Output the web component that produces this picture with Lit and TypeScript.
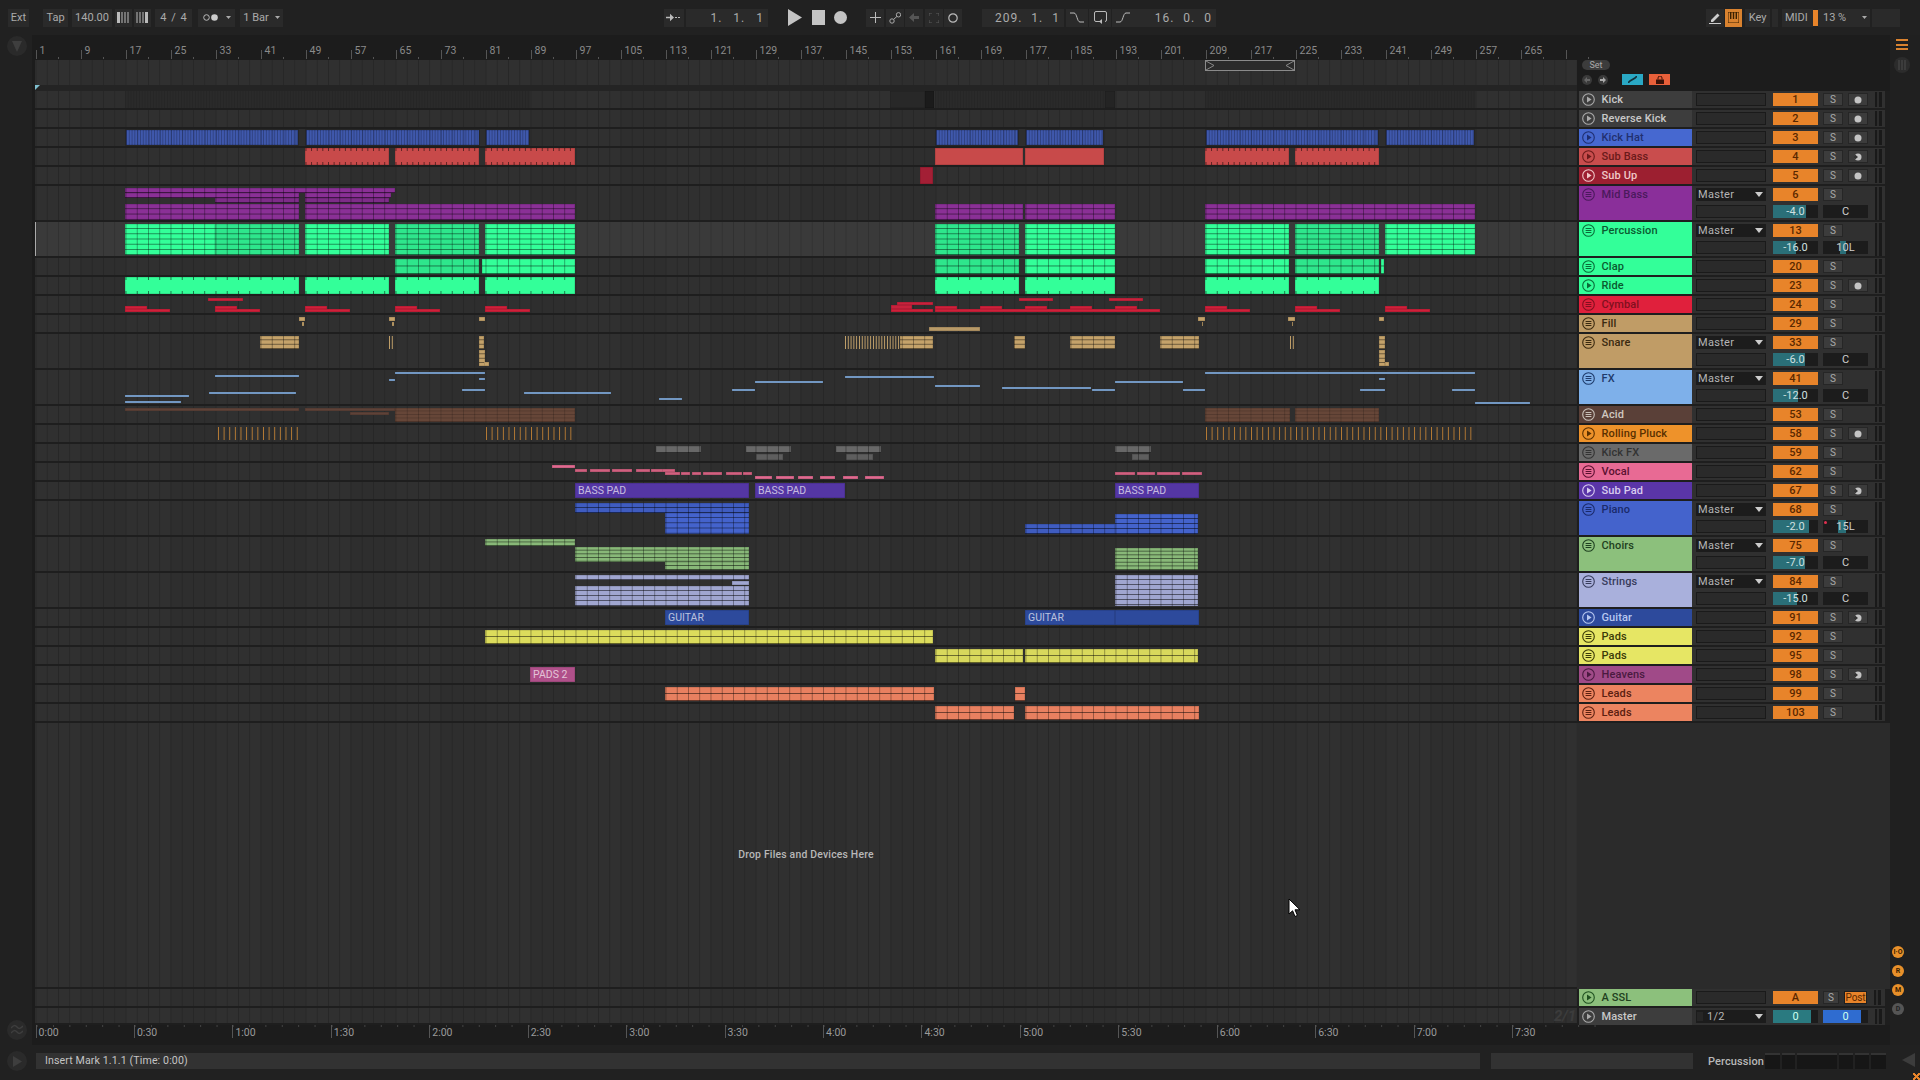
import { LitElement, html, css, svg } from "lit";
import { customElement } from "lit/decorators.js";

type Clip = { x: number; w: number; y: number; h: number; k: string; c?: string; r?: number; l?: string };
const clip = (x1: number, x2: number, y1: number, y2: number, k = "f", c?: string, r?: number, l?: string): Clip =>
  ({ x: x1, w: x2 - x1, y: y1, h: y2 - y1, k, c, r, l });
const spans = (list: number[][], y1: number, y2: number, k = "f", c?: string, r?: number) =>
  list.map(([a, b]) => clip(a, b, y1, y2, k, c, r));

const G = "#33ff99", GD = "#2ee68c";
const TRACKS: any[] = [
  { n: "Kick", c: "#3d3d3d", t: "#c8c8c8", ic: "#aaa", p: 1, num: "1", m: "f",
    clips: [...spans([[125, 530], [935, 1104], [1205, 1475]], 91, 108, "sd", "#2a2a2a"), clip(890, 925, 91, 108, "f", "#282828"), clip(925, 934, 91, 108, "f", "#1b1b1b"), clip(1105, 1115, 91, 108, "f", "#242424")] },
  { n: "Reverse Kick", c: "#3d3d3d", t: "#c8c8c8", ic: "#aaa", p: 1, num: "2", m: "f", clips: [] },
  { n: "Kick Hat", c: "#4668d0", t: "#22306f", ic: "#1f2e70", p: 1, num: "3", m: "f",
    clips: spans([[125, 299], [305, 480], [485, 530], [935, 1019], [1025, 1104], [1205, 1379], [1385, 1475]], 129, 146, "s", "#3f58ac") },
  { n: "Sub Bass", c: "#c94d4d", t: "#6a1a1a", ic: "#6a1a1a", p: 1, num: "4", m: "h",
    clips: [...spans([[305, 389], [395, 479], [485, 575], [1205, 1289], [1295, 1379]], 148, 165, "k k5", "#c84a4a"), ...spans([[935, 1023], [1025, 1104]], 148, 165, "f", "#c84a4a")] },
  { n: "Sub Up", c: "#9c1f30", t: "#f0c8c8", ic: "#f0c8c8", p: 1, num: "5", m: "f", clips: [clip(920, 933, 167, 184, "f", "#a31f35")] },
  { n: "Mid Bass", tall: 1, c: "#8a2f9a", t: "#4a1a5c", ic: "#4a1a5c", num: "6", vol: "-4.0", vp: 74, pan: "C",
    clips: [clip(125, 395, 188, 193, "g", "#8a3096", 5), ...spans([[125, 299], [305, 391]], 193, 198, "g", "#8a3096", 5), ...spans([[215, 299], [305, 389]], 198, 203, "g", "#7d2c88", 5),
      ...spans([[125, 299], [305, 575], [935, 1023], [1025, 1115], [1205, 1475]], 204, 220, "g", "#8a3096", 5.3)] },
  { n: "Percussion", tall: 1, sel: 1, c: G, t: "#0a5a30", ic: "#0a6a38", num: "13", vol: "-16.0", vp: 52, pan: "10L", pf: [37, 51],
    clips: [...spans([[125, 215], [305, 389], [485, 575], [1025, 1115], [1205, 1289], [1385, 1475]], 224, 255, "g", G, 5.2), ...spans([[215, 299], [395, 479], [935, 1019], [1295, 1379]], 224, 255, "g", GD, 5.2)] },
  { n: "Clap", c: G, t: "#0a5a30", ic: "#0a6a38", num: "20",
    clips: [...spans([[395, 479], [935, 1019], [1295, 1379]], 259, 274, "g", GD, 7.5), ...spans([[482, 575], [1025, 1115], [1205, 1289], [1381, 1384]], 259, 274, "g", G, 7.5)] },
  { n: "Ride", c: G, t: "#0a5a30", ic: "#0a6a38", p: 1, num: "23", m: "f",
    clips: spans([[125, 299], [305, 389], [395, 479], [485, 575], [935, 1019], [1025, 1115], [1205, 1289], [1295, 1379]], 277, 294, "k", G) },
  { n: "Cymbal", c: "#e0203c", t: "#80101f", ic: "#80101f", num: "24",
    clips: [...spans([[208, 243], [1019, 1053], [1109, 1143]], 298, 301, "f", "#c8223c"), clip(897, 933, 302, 305, "f", "#c8223c"), clip(891, 912, 305, 309, "f", "#c8223c"),
      ...spans([[125, 147], [215, 237], [305, 327], [395, 417], [485, 507], [935, 957], [980, 1002], [1025, 1047], [1070, 1092], [1115, 1137], [1205, 1227], [1295, 1317], [1385, 1407]], 306, 309, "f", "#d0203a"),
      ...spans([[125, 170], [215, 260], [305, 350], [395, 440], [485, 530], [891, 933], [935, 1160], [1205, 1250], [1295, 1340], [1385, 1430]], 309, 312, "f", "#d0203a")] },
  { n: "Fill", c: "#c09c66", t: "#3a2a10", ic: "#3a2a10", num: "29",
    clips: [...spans([[299, 305], [389, 395], [479, 485], [1198, 1205], [1288, 1295], [1379, 1384]], 317, 321, "f", "#c4a26a"), ...spans([[302, 304], [392, 394], [1202, 1203], [1292, 1293]], 322, 326, "f", "#c4a26a"), clip(929, 980, 327, 331, "f", "#b89a68")] },
  { n: "Snare", tall: 1, c: "#c09c66", t: "#3a2a10", ic: "#3a2a10", num: "33", vol: "-6.0", vp: 72, pan: "C",
    clips: [...spans([[260, 299], [900, 933], [1014, 1025], [1070, 1115], [1160, 1199], [1379, 1385], [479, 484]], 336, 349, "g", "#c4a26a", 4.4), clip(845, 900, 336, 349, "p p2", "#c4a26a"), ...spans([[389, 393], [1290, 1294]], 336, 349, "p p2", "#c4a26a"), clip(479, 485, 350, 366, "g", "#c4a26a", 4.4), clip(1379, 1385, 350, 366, "g", "#c4a26a", 4.4), clip(484, 489, 362, 366, "f", "#c4a26a"), clip(1385, 1389, 362, 366, "f", "#c4a26a")] },
  { n: "FX", tall: 1, c: "#7eb0ea", t: "#1e3a6a", ic: "#1e3a6a", num: "41", vol: "-12.0", vp: 55, pan: "C",
    clips: [[215, 299, 375], [389, 395, 379], [395, 485, 372], [479, 485, 378], [125, 189, 395], [125, 181, 401], [209, 296, 392], [462, 485, 389], [524, 611, 392], [659, 682, 398], [732, 755, 389], [755, 823, 381], [845, 934, 376], [935, 980, 385], [1002, 1091, 387], [1092, 1115, 389], [1115, 1183, 381], [1183, 1205, 389], [1205, 1475, 372], [1360, 1385, 389], [1379, 1385, 378], [1452, 1475, 389], [1475, 1530, 402]].map(([a, b, y]) => clip(a, b, y, y + 2, "f", "#7fa8d8")) },
  { n: "Acid", c: "#5a4038", t: "#d0c8c0", ic: "#c8c0b8", num: "53",
    clips: [...spans([[125, 299], [305, 395]], 408, 411, "f", "#5e4238"), clip(350, 389, 412, 415, "f", "#5e4238"), ...spans([[395, 575], [1205, 1290], [1295, 1379]], 408, 422, "gs", "#664638", 3.5)] },
  { n: "Rolling Pluck", c: "#ee922a", t: "#5a3000", ic: "#5a3000", p: 1, num: "58", m: "f",
    clips: spans([[218, 299], [486, 573], [1206, 1474]], 427, 440, "p", "#b87c34") },
  { n: "Kick FX", c: "#6a6a6a", t: "#333", ic: "#333", num: "59",
    clips: [...spans([[656, 701], [746, 791], [836, 881], [1115, 1151]], 446, 453, "g", "#686868", 7), ...spans([[756, 783], [846, 873], [1132, 1149]], 454, 460, "g", "#5e5e5e", 7)] },
  { n: "Vocal", c: "#e86a94", t: "#5a1030", ic: "#5a1030", num: "62",
    clips: [clip(552, 575, 465, 468, "f", "#e06a90"), ...spans([[575, 587], [590, 610], [612, 632], [636, 650], [651, 663], [662, 675]], 469, 472, "f", "#d0607f"), ...spans([[665, 680], [681, 690], [692, 701], [703, 722], [726, 742], [743, 752]], 472, 475, "f", "#d0607f"), ...spans([[755, 772], [776, 794], [798, 813], [820, 835], [843, 858], [865, 884]], 476, 479, "f", "#e06a90"), ...spans([[1115, 1135], [1137, 1155], [1157, 1180], [1182, 1202]], 472, 475, "f", "#d0607f")] },
  { n: "Sub Pad", c: "#5a35a8", t: "#d8ccf0", ic: "#d8ccf0", p: 1, num: "67", m: "h",
    clips: [clip(575, 749, 483, 498, "l", "#5436a4", 0, "BASS PAD"), clip(755, 845, 483, 498, "l", "#5436a4", 0, "BASS PAD"), clip(1115, 1199, 483, 498, "l", "#5436a4", 0, "BASS PAD")] },
  { n: "Piano", tall: 1, c: "#4463cc", t: "#1a2a6a", ic: "#1a2a6a", num: "68", vol: "-2.0", vp: 79, pan: "15L", pf: [33, 51], dot: 1,
    clips: [clip(575, 749, 503, 513, "g", "#3f5cc0", 5), clip(665, 749, 513, 534, "g", "#4463cc", 5.2), clip(1025, 1115, 524, 534, "g", "#3f5cc0", 5), clip(1115, 1198, 514, 534, "g", "#4463cc", 5)] },
  { n: "Choirs", tall: 1, c: "#8cc07c", t: "#1f4020", ic: "#1f4020", num: "75", vol: "-7.0", vp: 72, pan: "C",
    clips: [clip(485, 575, 539, 546, "g", "#88b878", 3.5), clip(575, 749, 547, 562, "g", "#88b878", 3.7), clip(665, 749, 562, 570, "g", "#88b878", 4), clip(1115, 1198, 548, 570, "g", "#88b878", 3.7)] },
  { n: "Strings", tall: 1, c: "#a9b0dc", t: "#383c5c", ic: "#383c5c", num: "84", vol: "-15.0", vp: 53, pan: "C",
    clips: [clip(575, 749, 575, 580, "g", "#a0a6d0", 5), clip(732, 749, 581, 585, "f", "#a0a6d0"), clip(575, 749, 586, 606, "g", "#a0a6d0", 5), clip(1115, 1198, 575, 606, "g", "#a0a6d0", 5)] },
  { n: "Guitar", c: "#2d4a9c", t: "#b8c8f0", ic: "#b8c8f0", p: 1, num: "91", m: "h",
    clips: [clip(665, 749, 610, 625, "l", "#2d4a9c", 0, "GUITAR"), clip(1025, 1115, 610, 625, "l", "#2d4a9c", 0, "GUITAR"), clip(1115, 1199, 610, 625, "l", "#2d4a9c")] },
  { n: "Pads", c: "#e6e664", t: "#3a3a08", ic: "#3a3a08", num: "92", clips: [clip(485, 933, 630, 644, "g", "#dcdc5c", 7)] },
  { n: "Pads", c: "#e6e664", t: "#3a3a08", ic: "#3a3a08", num: "95", clips: [clip(935, 1023, 649, 663, "g", "#d8d85c", 7), clip(1025, 1198, 649, 663, "g", "#d8d85c", 7)] },
  { n: "Heavens", c: "#a04a88", t: "#4a1a40", ic: "#4a1a40", p: 1, num: "98", m: "h", clips: [clip(530, 575, 667, 682, "l", "#b0508a", 0, "PADS 2")] },
  { n: "Leads", c: "#ec8460", t: "#5a2010", ic: "#5a2010", num: "99", clips: [clip(665, 934, 687, 701, "g", "#e88060", 7), clip(1015, 1025, 687, 701, "g", "#e88060", 7)] },
  { n: "Leads", c: "#ec8460", t: "#5a2010", ic: "#5a2010", num: "103", clips: [clip(935, 1014, 706, 720, "g", "#e88060", 7), clip(1025, 1199, 706, 720, "g", "#e88060", 7)] },
];

const circleIcon = (col: string, play: boolean) => html`<svg class="tic" viewBox="0 0 13 13" fill="none" stroke=${col} stroke-width="1.1">
  <circle cx="6.5" cy="6.5" r="5.8"></circle>
  ${play ? svg`<path d="M5 3.6 L9.6 6.5 L5 9.4Z" fill=${col} stroke="none"></path>` : svg`<path d="M3.6 4.5H9.4M3.6 6.5H9.4M3.6 8.5H9.4"></path>`}
</svg>`;

@customElement("app-root")
export class AppRoot extends LitElement {
  static styles = css`
    :host { display:block; width:1920px; height:1080px; background:#212121; font-family:Roboto,"Open Sans",sans-serif; color:#aaa; overflow:hidden; position:relative; }
    .app { display:flex; flex-direction:column; height:1080px; }
    svg { display:block; }

    .toolbar { height:35px; flex:none; display:flex; align-items:center; font-size:11px; color:#aaa; }
    .b { height:18px; flex:none; background:#2a2a2a; display:flex; align-items:center; justify-content:center; margin-top:0; }
    .ext { width:21px; margin-left:8px; }
    .tap { width:25px; margin-left:14px; }
    .bpm { width:40px; margin-left:4px; }
    .n1 { width:17px; margin-left:3px; }
    .n2 { width:17px; margin-left:2px; }
    .sig { width:37px; margin-left:4px; word-spacing:2px; }
    .qz { width:37px; margin-left:6px; gap:8px; }
    .bar1 { width:43px; margin-left:5px; gap:6px; }
    .arr { width:20px; margin-left:381px; }
    .pos { width:82px; margin-left:2px; justify-content:flex-end; padding-right:4px; box-sizing:border-box; letter-spacing:1px; word-spacing:5px; font-size:12px; }
    .first { word-spacing:7px; }
    .transport { display:flex; align-items:center; gap:9.5px; margin-left:20px; }
    .tools { display:flex; margin-left:19px; gap:1.5px; }
    .tools .b { width:18px; }
    .pos2 { margin-left:20px; }
    .curves { display:flex; margin-left:2px; gap:1px; }
    .curves .b { width:22px; }
    .len { margin-left:0; }
    .pen { width:18px; margin-left:490px; }
    .keys { width:17px; height:18px; flex:none; margin-left:1px; background:#d9822f; display:flex; align-items:center; justify-content:center; }
    .key { width:25px; margin-left:3px; }
    .small { width:6px; margin-left:2px; }
    .midi { width:31px; margin-left:4px; justify-content:flex-start; padding-left:3px; box-sizing:border-box; }
    .pct { width:52px; justify-content:flex-start; padding-left:5px; box-sizing:border-box; gap:16px; }
    .orange { width:5px; height:16px; flex:none; background:#e8842a; }
    .tail { width:28px; margin-left:2px; }

    .mid { flex:none; height:1010px; display:flex; }
    .left { width:32px; flex:none; display:flex; flex-direction:column; justify-content:space-between; align-items:center; padding:1px 0 5px 2px; box-sizing:border-box; }
    .roundbtn { width:20px; height:20px; border-radius:50%; background:#2a2a2a; display:flex; align-items:center; justify-content:center; }
    .panel { width:1858px; flex:none; background:#1c1c1c; display:flex; flex-direction:column; padding-left:3px; box-sizing:border-box; }
    .right { flex:1; display:flex; flex-direction:column; align-items:center; padding:4px 6px 0 0; box-sizing:border-box; background:#202020; }
    .burger { width:12px; height:11px; display:flex; flex-direction:column; justify-content:space-between; margin-bottom:7px; }
    .burger i { height:2px; background:#d9822f; display:block; }
    .dis { width:16px; height:16px; border-radius:50%; background:#2c2c2c; display:flex; align-items:center; justify-content:center; }
    .sidebtns { margin-top:auto; display:flex; flex-direction:column; gap:7px; padding-bottom:30px; margin-left:-8px; }
    .sb { width:12px; height:12px; border-radius:50%; background:#e8902a; color:#3a2000; font-size:7px; font-weight:700; display:flex; align-items:center; justify-content:center; }
    .sb.off { background:#555; color:#222; }

    .ruler { height:25px; flex:none; display:flex; align-items:flex-end; padding-left:.5px; }
    .rt { flex:none; width:45px; height:16px; box-sizing:border-box; font-size:10.5px; line-height:16px; padding-left:4px; color:#8a8a8a; position:relative; top:-1px; background:linear-gradient(#555,#555) 0 100%/1px 9px no-repeat,linear-gradient(#555,#555) 22px 100%/1px 2px no-repeat; }

    .hdr { height:31px; flex:none; display:flex; }
    .hlane { width:1542px; flex:none; display:flex; flex-direction:column; }
    .locs { height:25px; flex:none; position:relative; }
    .hdark { height:6px; flex:none; position:relative; background:#242424; }
    .grid { background-color:#2e2e2e; background-image:linear-gradient(90deg,#272727 1px,transparent 1px),repeating-linear-gradient(90deg,rgba(255,255,255,.012) 0 45px,transparent 45px 90px); background-size:11.25px 100%,auto; background-position:.5px 0,.5px 0; }
    .loop { position:absolute; left:1170px; width:90px; top:0; height:11px; border:1px solid #8a8a8a; box-sizing:border-box; background:#2a2a2a; }
    .loop svg { position:absolute; left:0; top:0; }
    .loop .e { left:auto; right:0; }
    .mark { position:absolute; left:0; top:0; }
    .hside { padding:0 0 0 5px; flex:1; display:flex; flex-direction:column; align-items:flex-start; }
    .set { width:28px; height:10px; border-radius:5px; background:#3c3c3c; font-size:9px; line-height:10px; text-align:center; color:#aaa; }
    .hbtns { display:flex; align-items:center; margin-top:4px; }
    .dot { width:10px; height:10px; border-radius:50%; background:#3a3a3a; margin-right:6px; display:flex; align-items:center; justify-content:center; }
    .cy { width:21px; height:11px; background:#2aa8c4; margin-left:8px; display:flex; align-items:center; justify-content:center; }
    .lk { width:21px; height:11px; background:#e8603a; margin-left:6px; display:flex; align-items:center; justify-content:center; }

    .row { height:19px; flex:none; display:flex; background:#1e1e1e; }
    .row.tall { height:36px; }
    .lane { width:1542px; flex:none; height:calc(100% - 2px); position:relative; }
    .lane.sel { background-color:#3a3a3a; background-image:linear-gradient(90deg,#313131 1px,transparent 1px); box-shadow:inset 1px 0 #aaa; }
    .clip { position:absolute; box-shadow:inset 0 0 0 .5px rgba(0,0,0,.2); overflow:hidden; }
    .clip.g { background-image:linear-gradient(rgba(0,0,0,.5) 1px,transparent 1px),linear-gradient(90deg,rgba(0,0,0,.35) 1px,transparent 1px); background-size:100% var(--r),11.25px 100%; background-position:0 calc(var(--r) - 1px),var(--o) 0; }
    .clip.gs { background-image:linear-gradient(rgba(0,0,0,.18) 1px,transparent 1px),linear-gradient(90deg,rgba(0,0,0,.18) 1px,transparent 1px); background-size:100% var(--r),11.25px 100%; background-position:0 calc(var(--r) - 1px),var(--o) 0; }
    .clip.s { background-image:linear-gradient(90deg,rgba(0,0,0,.25) 1px,transparent 1px),linear-gradient(90deg,rgba(0,0,0,.2) 1px,transparent 1px); background-size:2.8px 100%,11.25px 100%; }
    .clip.sd { box-shadow:none; background-image:linear-gradient(90deg,rgba(0,0,0,.1) 1px,transparent 1px); background-size:2.8px 100%; }
    .clip.k { background-image:linear-gradient(90deg,rgba(0,0,0,.55) 1px,transparent 1px),linear-gradient(90deg,rgba(0,0,0,.55) 1px,transparent 1px); background-size:11.25px 3px,11.25px 3px; background-repeat:repeat-x; background-position:var(--o) 0,var(--o) 100%; }
    .clip.k5 { background-size:5.625px 3px,5.625px 3px; }
    .clip.p { background-color:transparent !important; box-shadow:none; background-image:linear-gradient(90deg,var(--c) 1px,transparent 1px); background-size:5.625px 100%; }
    .clip.p2 { background-size:2.8px 100%; }
    .clip.l { font-size:10.5px; line-height:15px; padding-left:3px; box-sizing:border-box; color:rgba(255,255,255,.68); white-space:nowrap; }
    .title { width:113px; flex:none; margin-left:2px; height:17px; display:flex; align-items:flex-start; padding:2px 0 0 3px; box-sizing:border-box; font-size:11px; font-weight:500; letter-spacing:.12px; line-height:13px; }
    .tall .title { height:34px; }
    .tic { width:13px; height:13px; flex:none; margin-right:6.5px; }
    .slotcol { width:78px; flex:none; height:17px; background:#303030; display:flex; flex-direction:column; gap:4px; padding:2px 4px 0; box-sizing:border-box; }
    .tall .slotcol { height:34px; }
    .slot { height:13px; box-sizing:border-box; background:#2a2a2a; border:1px solid #1a1a1a; flex:none; }
    .drop { height:13px; background:#1c1c1c; font-size:11px; color:#b5b5b5; padding-left:2px; line-height:13px; letter-spacing:.3px; position:relative; flex:none; }
    .drop::after { content:""; position:absolute; right:3px; top:4px; border-left:4px solid transparent; border-right:4px solid transparent; border-top:5px solid #ccc; }
    .mix { padding:2px 0 0 3px; box-sizing:border-box; width:115px; flex:none; height:17px; background:#303030; display:grid; grid-template-columns:45px 20px 20px 7px; column-gap:5px; grid-template-rows:13px; row-gap:4px; }
    .tall .mix { height:34px; grid-template-rows:13px 13px; }
    .mix.ret { grid-template-columns:45px 16px 23px 7px; column-gap:5px 6px; }
    .num { background:#e8842a; color:#5a2800; font-size:11px; font-weight:500; text-align:center; line-height:13px; }
    .s { background:#3c3c3c; border:1px solid #262626; box-sizing:border-box; font-size:10px; line-height:11px; text-align:center; color:#aaa; }
    .mon { background:#3c3c3c; border:1px solid #262626; box-sizing:border-box; display:flex; align-items:center; justify-content:center; }
    .meter { grid-column:4; grid-row:1 / -1; margin-left:2px; margin-top:-1px; background:linear-gradient(90deg,#191919 0 2px,#2d2d2d 2px 4px,#191919 4px 6px); width:7px; height:15px; }
    .tall .meter { height:33px; }
    .vol { grid-column:1; background:#1c1c1c; font-size:11px; line-height:13px; text-align:center; color:#cfe0e0; position:relative; }
    .vol i,.pan i { position:absolute; top:0; bottom:0; display:block; background:#2a6f78; }
    .vol span,.pan span { position:relative; }
    .pan { grid-column:2 / 4; background:#1c1c1c; font-size:11px; line-height:13px; text-align:center; color:#cfcfcf; position:relative; }
    .red { position:absolute; left:1px; top:1px; width:3px; height:3px; border-radius:50%; background:#e03050; }

    .filler { flex:1; display:flex; min-height:0; }
    .fl { width:1542px; flex:none; display:flex; align-items:center; justify-content:center; border-bottom:2px solid #1e1e1e; box-sizing:border-box; font-size:10.4px; font-weight:500; color:#b8b8b8; letter-spacing:.2px; padding-bottom:2px; }
    .fr { flex:1; background:#2b2b2b; }
    .frow { height:19px; }
    .frow.last { height:17px; }
    .post { background:#e8842a; border:1px solid #1e1e1e; box-sizing:border-box; color:#5a2800; font-size:10px; line-height:11px; text-align:center; letter-spacing:-.1px; }
    .retnum { background:#e8842a; color:#5a2800; font-size:11px; font-weight:500; text-align:center; line-height:13px; }
    .cue { background:#1c1c1c; position:relative; color:#cfe; font-size:11px; text-align:center; line-height:13px; }
    .cue.bl { grid-column:2 / 4; }
    .cue i { position:absolute; left:0; top:0; bottom:0; width:85%; display:block; background:#2a7a80; }
    .cue.bl i { background:#2f6cd0; }
    .cue span { position:relative; }
    .sub21 { position:absolute; right:1px; top:1px; font-size:15px; font-weight:700; font-style:italic; color:#3c3c3c; line-height:15px; }
    .msdrop { color:#b5b5b5; padding-left:11px; }
    .msdrop::before { content:""; position:absolute; left:1px; top:2px; width:6px; height:9px; background:#262626; }

    .time { height:20px; flex:none; display:flex; padding-left:.5px; position:relative; }
    .tm { flex:none; width:98.44px; height:13px; border-left:1px solid #555; box-sizing:border-box; font-size:10.5px; color:#9a9a9a; padding:2px 0 0 2px; line-height:12px; background:linear-gradient(90deg,#444 1px,transparent 1px) 16px 0/16.4px 2px repeat-x; }

    .status { flex:1; display:flex; align-items:flex-start; padding-top:8px; box-sizing:border-box; position:relative; }
    .st-play { width:20px; height:20px; border-radius:50%; background:#2a2a2a; margin:-2px 0 0 7px; display:flex; align-items:center; justify-content:center; flex:none; }
    .msg { width:1444px; height:16px; margin-left:9px; flex:none; background:#323232; font-size:10.6px; line-height:16px; padding-left:9px; box-sizing:border-box; color:#c4c4c4; letter-spacing:.12px; }
    .st2 { width:202px; height:16px; margin-left:11px; flex:none; background:#323232; }
    .cur { font-size:11px; font-weight:500; color:#b8b8b8; margin-left:15px; line-height:18px; width:57px; flex:none; letter-spacing:.1px; }
    .thumbs { display:flex; gap:2px; flex:none; height:16px; }
    .thumbs i { display:block; height:16px; background:#161616; box-shadow:inset 0 2px #333; }
    .t1 { width:15px; } .t2 { width:13px; } .t3 { width:40px; } .t4 { width:14px; }
    .st-tri { margin-left:16px; flex:none; }
    .cursor { position:absolute; left:1288px; top:898px; }
    .corner { position:absolute; right:0; bottom:0; width:7px; height:7px; background:linear-gradient(45deg,transparent 40%,#e8842a 40% 60%,transparent 60%),linear-gradient(-45deg,transparent 40%,#e8842a 40% 60%,transparent 60%); }
  `;

  private clips(list: Clip[], top: number) {
    return list.map((c) => {
      const x = c.x - 35;
      const o = -((c.x - 35.5) % 11.25);
      return html`<div class="clip ${c.k}" style="left:${x}px;width:${c.w}px;top:${c.y - top}px;height:${c.h}px;background-color:${c.c};--c:${c.c};--r:${c.r ?? 5}px;--o:${o}px">${c.l ?? ""}</div>`;
    });
  }

  private monBtn(m?: string) {
    if (!m) return html`<div></div>`;
    return html`<div class="mon"><svg width="8" height="8" viewBox="0 0 8 8">
      <circle cx="4" cy="4" r="3.5" fill="#c4c4c4"></circle>
      ${m === "h" ? svg`<path d="M4 4L1 6.5A3.9 3.9 0 0 1 1 1.5Z" fill="#333"></path>` : ""}
    </svg></div>`;
  }

  private trackRow(t: any, y: number) {
    return html`<div class="row ${t.tall ? "tall" : ""}">
      <div class="lane grid ${t.sel ? "sel" : ""}">${this.clips(t.clips, y)}</div>
      <div class="title" style="background:${t.c};color:${t.t}">${circleIcon(t.ic, !!t.p)}<span>${t.n}</span></div>
      <div class="slotcol">
        ${t.tall ? html`<div class="drop">Master</div>` : ""}
        <div class="slot"></div>
      </div>
      <div class="mix">
        <div class="num">${t.num}</div>
        <div class="s">S</div>
        ${this.monBtn(t.m)}
        <div class="meter"></div>
        ${t.tall ? html`
          <div class="vol"><i style="left:0;width:${t.vp}%"></i><span>${t.vol}</span></div>
          <div class="pan">${t.pf ? html`<i style="left:${t.pf[0]}%;width:${t.pf[1] - t.pf[0]}%"></i>` : ""}${t.dot ? html`<b class="red"></b>` : ""}<span>${t.pan}</span></div>
        ` : ""}
      </div>
    </div>`;
  }

  render() {
    let y = 91;
    const bars = Array.from({ length: 34 }, (_, i) => i * 8 + 1);
    const times = Array.from({ length: 16 }, (_, i) => `${Math.floor(i / 2)}:${i % 2 ? "30" : "00"}`);
    return html`<div class="app">
      <div class="toolbar">
        <div class="b ext">Ext</div>
        <div class="b tap">Tap</div>
        <div class="b bpm">140.00</div>
        <div class="b n1"><svg width="13" height="11" viewBox="0 0 13 11" fill="#bbb"><rect x="0" width="3" height="11"></rect><rect x="4.5" width="1" height="11"></rect><rect x="7.5" width="1" height="11"></rect><rect x="10.5" width="1" height="11"></rect></svg></div>
        <div class="b n2"><svg width="13" height="11" viewBox="0 0 13 11" fill="#bbb"><rect x="0.5" width="1" height="11"></rect><rect x="3.5" width="1" height="11"></rect><rect x="6.5" width="1" height="11"></rect><rect x="9" width="3" height="11"></rect></svg></div>
        <div class="b sig">4 / 4</div>
        <div class="b qz"><svg width="15" height="7" viewBox="0 0 15 7"><circle cx="3.5" cy="3.5" r="2.8" fill="none" stroke="#bbb"></circle><circle cx="11.5" cy="3.5" r="3.3" fill="#ccc"></circle></svg><svg width="5" height="3" viewBox="0 0 5 3"><path d="M0 0H5L2.5 3Z" fill="#aaa"></path></svg></div>
        <div class="b bar1">1 Bar<svg width="5" height="3" viewBox="0 0 5 3"><path d="M0 0H5L2.5 3Z" fill="#aaa"></path></svg></div>

        <div class="b arr"><svg width="16" height="9" viewBox="0 0 16 9" fill="#bbb"><path d="M0 3.7H4V0.8L8 4.5L4 8.2V5.3H0Z"></path><rect x="9" y="4" width="2" height="1"></rect><rect x="12" y="4" width="2" height="1"></rect></svg></div>
        <div class="b pos first">1. 1. 1</div>
        <div class="transport">
          <svg width="14" height="17" viewBox="0 0 14 17"><path d="M0 0L14 8.5L0 17Z" fill="#c4c4c4"></path></svg>
          <svg width="13" height="15" viewBox="0 0 13 15"><rect width="13" height="15" fill="#c4c4c4"></rect></svg>
          <svg width="13" height="13" viewBox="0 0 13 13"><circle cx="6.5" cy="6.5" r="6.5" fill="#c4c4c4"></circle></svg>
        </div>
        <div class="tools">
          <div class="b"><svg width="11" height="11" viewBox="0 0 11 11" stroke="#bbb"><path d="M5.5 0V11M0 5.5H11"></path></svg></div>
          <div class="b"><svg width="12" height="12" viewBox="0 0 12 12" fill="none" stroke="#aaa"><circle cx="3" cy="9" r="2.2"></circle><circle cx="9.5" cy="2.8" r="2.2"></circle><path d="M4.6 7.4L8 4.4"></path></svg></div>
          <div class="b"><svg width="10" height="9" viewBox="0 0 10 9" fill="#555"><path d="M5 0V3H10V6H5V9L0 4.5Z"></path></svg></div>
          <div class="b"><svg width="10" height="10" viewBox="0 0 10 10" fill="none" stroke="#5a5a5a"><path d="M0 3V0H3M7 0H10V3M10 7V10H7M3 10H0V7"></path></svg></div>
          <div class="b"><svg width="10" height="10" viewBox="0 0 10 10"><circle cx="5" cy="5" r="4.2" fill="none" stroke="#bbb" stroke-width="1.2"></circle></svg></div>
        </div>
        <div class="b pos pos2">209. 1. 1</div>
        <div class="curves">
          <div class="b"><svg width="14" height="11" viewBox="0 0 14 11" fill="none" stroke="#bbb"><path d="M0 1H4C7 1 7 10 10 10H14"></path></svg></div>
          <div class="b"><svg width="13" height="13" viewBox="0 0 13 13" fill="none" stroke="#bbb"><path d="M7 10.5H2A1.5 1.5 0 0 1 .5 9V2A1.5 1.5 0 0 1 2 .5H11A1.5 1.5 0 0 1 12.5 2V9A1.5 1.5 0 0 1 11 10.5"></path><path d="M8 8V13L5 10.5Z" fill="#bbb" stroke="none"></path></svg></div>
          <div class="b"><svg width="14" height="11" viewBox="0 0 14 11" fill="none" stroke="#bbb"><path d="M0 10H4C7 10 7 1 10 1H14"></path></svg></div>
        </div>
        <div class="b pos len">16. 0. 0</div>
        <div class="b pen"><svg width="12" height="12" viewBox="0 0 12 12"><path d="M2 8L8.5 1.5L10.5 3.5L4 10H2Z" fill="#ccc"></path><rect y="11" width="12" height="1" fill="#ccc"></rect></svg></div>
        <div class="keys"><svg width="11" height="11" viewBox="0 0 11 11"><path d="M0 0H11V11H0Z" fill="none" stroke="#3a2000"></path><path d="M2 0H3.4V7H2ZM4.8 0H6.2V7H4.8ZM7.6 0H9V7H7.6ZM3.7 7V11M6.5 7V11" fill="#3a2000"></path></svg></div>
        <div class="b key">Key</div>
        <div class="b small"></div>
        <div class="b midi">MIDI</div>
        <div class="orange"></div>
        <div class="b pct">13 %<svg width="5" height="3" viewBox="0 0 5 3"><path d="M0 0H5L2.5 3Z" fill="#aaa"></path></svg></div>
        <div class="b tail"></div>
      </div>

      <div class="mid">
        <div class="left">
          <div class="roundbtn"><svg width="10" height="11" viewBox="0 0 10 11"><path d="M0 0H10L5 11Z" fill="#3e3e3e"></path></svg></div>
          <div class="roundbtn"><svg width="12" height="12" viewBox="0 0 12 12" fill="none" stroke="#3e3e3e" stroke-width="1.5"><path d="M0 4C3 1 4 1 6 3S9 5 12 2M0 9C3 6 4 6 6 8S9 10 12 7"></path></svg></div>
        </div>
        <div class="panel">
          <div class="ruler">${bars.map((b) => html`<div class="rt">${b}</div>`)}<div class="rt"></div></div>
          <div class="hdr">
            <div class="hlane">
              <div class="locs grid">
                <div class="loop">
                  <svg width="9" height="9" viewBox="0 0 9 9" fill="none" stroke="#888"><path d="M0 0L8 4.5L0 9"></path></svg>
                  <svg class="e" width="9" height="9" viewBox="0 0 9 9" fill="none" stroke="#888"><path d="M9 0L1 4.5L9 9"></path></svg>
                </div>
              </div>
              <div class="hdark"><svg class="mark" width="6" height="6" viewBox="0 0 6 6"><path d="M0 0H5L0 5Z" fill="#7fc0d0"></path></svg></div>
            </div>
            <div class="hside">
              <div class="set">Set</div>
              <div class="hbtns">
                <div class="dot"><svg width="6" height="6" viewBox="0 0 6 6"><path d="M3 0V2H6V4H3V6L0 3Z" fill="#666"></path></svg></div>
                <div class="dot"><svg width="6" height="6" viewBox="0 0 6 6"><path d="M3 0V2H0V4H3V6L6 3Z" fill="#aaa"></path></svg></div>
                <div class="cy"><svg width="9" height="7" viewBox="0 0 9 7"><path d="M0 7L2 5L7 2L9 0" stroke="#12303a" stroke-width="1.6" fill="none"></path></svg></div>
                <div class="lk"><svg width="8" height="8" viewBox="0 0 8 8"><rect y="3.5" width="8" height="4.5" fill="#3a1208"></rect><path d="M2 3.5V2A2 2 0 0 1 6 2V3.5" fill="none" stroke="#3a1208"></path></svg></div>
              </div>
            </div>
          </div>

          ${TRACKS.map((t) => { const r = this.trackRow(t, y); y += t.tall ? 36 : 19; return r; })}

          <div class="filler">
            <div class="fl grid">Drop Files and Devices Here</div>
            <div class="fr"></div>
          </div>

          <div class="row frow">
            <div class="lane grid"></div>
            <div class="title" style="background:#8cc07c;color:#1f4020">${circleIcon("#1f5020", true)}<span>A SSL</span></div>
            <div class="slotcol"><div class="slot"></div></div>
            <div class="mix ret">
              <div class="retnum">A</div>
              <div class="s">S</div>
              <div class="post">Post</div>
              <div class="meter"></div>
            </div>
          </div>
          <div class="row frow last">
            <div class="lane grid"><span class="sub21">2/1</span></div>
            <div class="title" style="background:#3d3d3d;color:#c8c8c8">${circleIcon("#aaa", true)}<span>Master</span></div>
            <div class="slotcol"><div class="drop msdrop">1/2</div></div>
            <div class="mix">
              <div class="cue"><i></i><span>0</span></div>
              <div class="cue bl"><i></i><span>0</span></div>
              <div class="meter"></div>
            </div>
          </div>

          <div class="time">${times.map((s) => html`<div class="tm">${s}</div>`)}</div>
        </div>
        <div class="right">
          <div class="burger"><i></i><i></i><i></i></div>
          <div class="dis"><svg width="10" height="10" viewBox="0 0 10 10" fill="#3c3c3c"><rect x="1" width="2" height="10"></rect><rect x="4" width="2" height="10"></rect><rect x="7" width="2" height="10"></rect></svg></div>
          <div class="sidebtns">
            <div class="sb">I·O</div><div class="sb">R</div><div class="sb">M</div><div class="sb off">D</div>
          </div>
        </div>
      </div>

      <div class="status">
        <div class="st-play"><svg width="9" height="11" viewBox="0 0 9 11"><path d="M0 0L9 5.5L0 11Z" fill="#3e3e3e"></path></svg></div>
        <div class="msg">Insert Mark 1.1.1 (Time: 0:00)</div>
        <div class="st2"></div>
        <div class="cur">Percussion</div>
        <div class="thumbs"><i class="t1"></i><i class="t2"></i><i class="t3"></i><i class="t4"></i><i class="t4"></i><i class="t1"></i></div>
        <svg class="st-tri" width="13" height="14" viewBox="0 0 13 14"><path d="M13 0V14L0 7Z" fill="#3c3c3c"></path></svg>
        <div class="corner"></div>
      </div>

      <svg class="cursor" width="13" height="20" viewBox="0 0 13 20"><path d="M1 1V16L4.6 12.8L7 18.5L9.4 17.4L7 11.8H12Z" fill="#fff" stroke="#000" stroke-width="1"></path></svg>
    </div>`;
  }
}
